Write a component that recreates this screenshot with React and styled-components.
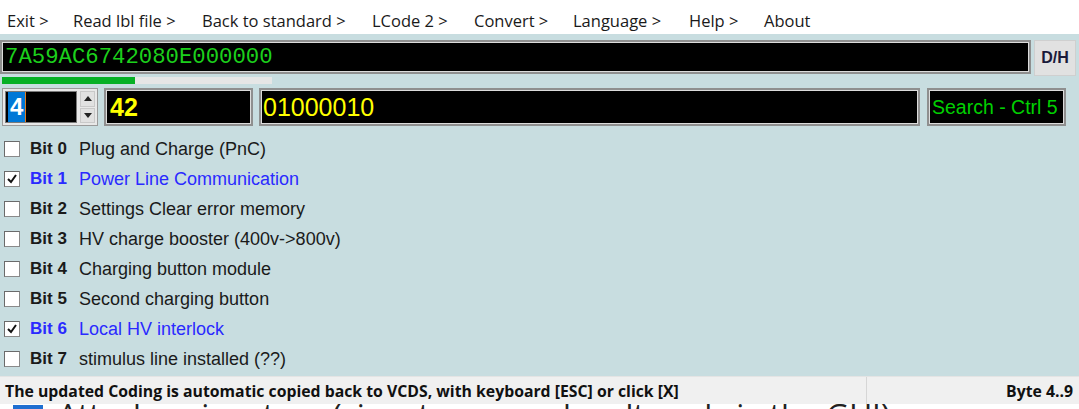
import React from 'react'
import styled, { createGlobalStyle } from 'styled-components'

const Global = createGlobalStyle`
body {
  margin: 0;
  background: #ffffff;
  overflow: hidden;
}
`
const Window = styled.div`
width: 1079px;
height: 409px;
display: flex;
flex-direction: column;
overflow: hidden;
& > * {
  flex-shrink: 0;
}
`
const MenuBar = styled.div`
height: 34px;
display: flex;
align-items: center;
padding-left: 7px;
background: #ffffff;
font-family: "Open Sans", sans-serif;
font-size: 16.5px;
color: #1a1a1a;
`
const MenuItem = styled.span`
width: ${({ w }) => w}px;
white-space: nowrap;
padding-top: 6px;
`
const Panel = styled.div`
background: #c8dde0;
height: 342px;
box-sizing: border-box;
display: flex;
flex-direction: column;
padding-top: 6px;
`
const HexRow = styled.div`
display: flex;
gap: 3px;
height: 36px;
`
const BlackField = styled.div`
background: #000;
border: 2px solid #8f8f8f;
box-shadow: inset 0 0 0 1px #dcdcdc;
display: flex;
align-items: center;
box-sizing: border-box;
white-space: nowrap;
`
const HexField = styled(BlackField)`
width: 1031px;
height: 34px;
padding-left: 3px;
font-family: "Liberation Mono", monospace;
font-size: 22.3px;
color: #1cd01c;
`
const DHButton = styled.div`
width: 42px;
height: 36px;
box-sizing: border-box;
background: #e1e1e1;
border: 1px solid #cfcfcf;
display: flex;
align-items: center;
justify-content: center;
font-family: "Liberation Sans", Arial, sans-serif;
font-weight: bold;
font-size: 16px;
color: #1a1a3a;
`
const Progress = styled.div`
margin: 1px 0 0 2px;
width: 270px;
height: 7px;
background: #e6e6e6;
`
const ProgressFill = styled.div`
height: 100%;
background: #06b025;
`
const InputRow = styled.div`
display: flex;
align-items: center;
margin-top: 4px;
height: 38px;
padding-left: 2px;
`
const Spin = styled.div`
width: 96px;
height: 38px;
box-sizing: border-box;
border: 1px solid #9a9a9a;
background: #e8e8e8;
display: flex;
padding: 2px;
gap: 3px;
`
const SpinField = styled.div`
width: 68px;
background: #000;
border: 1px solid #7a7a7a;
display: flex;
align-items: center;
padding-left: 2px;
`
const Selected = styled.span`
background: #0078d7;
color: #fff;
font-family: "Liberation Sans", Arial, sans-serif;
font-weight: bold;
font-size: 24px;
line-height: 30px;
padding: 0 2px;
border-right: 1px solid #e07b20;
`
const SpinButtons = styled.div`
flex: 1;
display: flex;
flex-direction: column;
gap: 1px;
`
const SpinButton = styled.div`
flex: 1;
background: #e1e1e1;
border: 1px solid #c9c9c9;
display: flex;
align-items: center;
justify-content: center;
`
const ValueField = styled(BlackField)`
width: ${({ w }) => w}px;
height: 38px;
margin-left: ${({ ml }) => ml}px;
padding-left: ${({ pl }) => pl}px;
font-family: "Liberation Sans", Arial, sans-serif;
font-size: ${({ fs }) => fs}px;
font-weight: ${({ bold }) => (bold ? 'bold' : 'normal')};
color: ${({ c }) => c};
`
const Bits = styled.div`
display: flex;
flex-direction: column;
margin-top: 8px;
`
const BitRow = styled.label`
display: flex;
align-items: center;
height: 30px;
padding-left: 4px;
font-family: "Liberation Sans", Arial, sans-serif;
font-size: 18px;
color: ${({ on }) => (on ? '#2a2aff' : '#1a1a1a')};
`
const Box = styled.span`
width: 16px;
height: 16px;
box-sizing: border-box;
background: #fff;
border: 1px solid #8a8a8a;
border-top-color: #6a6a6a;
border-left-color: #6a6a6a;
display: flex;
align-items: center;
justify-content: center;
`
const BitNo = styled.span`
font-weight: bold;
font-size: 17px;
margin-left: 10px;
width: 49px;
`
const StatusBar = styled.div`
height: 27px;
background: #f0f0f0;
display: flex;
align-items: center;
font-family: "Open Sans", sans-serif;
font-weight: 700;
font-size: 15.8px;
color: #111;
border-top: 1px solid #e4e4e4;
`
const StatusText = styled.div`
width: 861px;
padding-left: 5px;
border-right: 1px solid #d6d6d6;
height: 100%;
display: flex;
align-items: center;
white-space: nowrap;
`
const StatusRight = styled.div`
flex: 1;
text-align: right;
padding-right: 6px;
`
const Behind = styled.div`
flex: 1;
min-height: 0;
background: #fff;
overflow: hidden;
`
const BehindText = styled.div`
display: flex;
align-items: flex-start;
gap: 15px;
padding-left: 13px;
margin-top: -5px;
font-family: "Open Sans", sans-serif;
font-size: 31.5px;
line-height: 30px;
color: #222;
white-space: nowrap;
`
const BlueBox = styled.span`
width: 30px;
height: 30px;
margin-top: 6px;
background: #1f6fd1;
`

const bits = [
  { t: 'Plug and Charge (PnC)' },
  { t: 'Power Line Communication', on: true },
  { t: 'Settings Clear error memory' },
  { t: 'HV charge booster (400v->800v)' },
  { t: 'Charging button module' },
  { t: 'Second charging button' },
  { t: 'Local HV interlock', on: true },
  { t: 'stimulus line installed (??)' },
]

const menu = [
  ['Exit >', 66], ['Read lbl file >', 129], ['Back to standard >', 170], ['LCode 2 >', 102],
  ['Convert >', 99], ['Language >', 116], ['Help >', 75], ['About', 60],
]

function Check({ on }) {
  return (
    <Box>
      {on && (
        <svg width="12" height="12" viewBox="0 0 12 12">
          <path d="M2 6 L5 9 L10 2" fill="none" stroke="#111" strokeWidth="2" />
        </svg>
      )}
    </Box>
  )
}

function Arrow({ up }) {
  return (
    <svg width="8" height="5" viewBox="0 0 8 5">
      <path d={up ? 'M0 5 L4 0 L8 5 Z' : 'M0 0 L4 5 L8 0 Z'} fill="#222" />
    </svg>
  )
}

export default function App() {
  return (
    <Window>
      <Global />
      <MenuBar>
        {menu.map(([m, w]) => <MenuItem key={m} w={w}>{m}</MenuItem>)}
      </MenuBar>
      <Panel>
        <HexRow>
          <HexField>7A59AC6742080E000000</HexField>
          <DHButton>D/H</DHButton>
        </HexRow>
        <Progress>
          <ProgressFill style={{ width: `${(133 / 270) * 100}%` }} />
        </Progress>
        <InputRow>
          <Spin>
            <SpinField><Selected>4</Selected></SpinField>
            <SpinButtons>
              <SpinButton><Arrow up /></SpinButton>
              <SpinButton><Arrow /></SpinButton>
            </SpinButtons>
          </Spin>
          <ValueField w={149} ml={6} pl={4} fs={25} bold c="#ffff00">42</ValueField>
          <ValueField w={661} ml={6} pl={2} fs={25} c="#ffff00">01000010</ValueField>
          <ValueField w={139} ml={7} pl={3} fs={19.5} c="#00d000">Search - Ctrl 5</ValueField>
        </InputRow>
        <Bits>
          {bits.map((b, i) => (
            <BitRow key={i} on={b.on ? 1 : 0}>
              <Check on={b.on} />
              <BitNo>Bit {i}</BitNo>
              <span>{b.t}</span>
            </BitRow>
          ))}
        </Bits>
      </Panel>
      <StatusBar>
        <StatusText>The updated Coding is automatic copied back to VCDS, with keyboard [ESC] or click [X]</StatusText>
        <StatusRight>Byte 4..9</StatusRight>
      </StatusBar>
      <Behind>
        <BehindText>
          <BlueBox />
          <span>Attach a signature (signatures can be altered via the GUI)</span>
        </BehindText>
      </Behind>
    </Window>
  )
}
